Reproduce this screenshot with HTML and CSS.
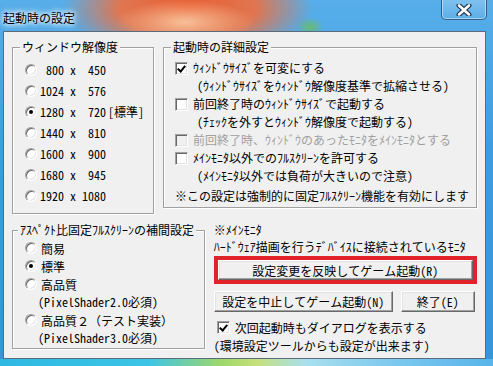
FILE: index.html
```html
<!DOCTYPE html>
<html lang="ja">
<head>
<meta charset="utf-8">
<title>起動時の設定</title>
<link rel="stylesheet" href="styles.css">
</head>
<body>
<div class="window">
  <div class="titlebar">
    <span class="title">起動時の設定</span>
    <div class="close">
      <svg width="20" height="12" viewBox="0 0 20 12">
        <path d="M5 1.5 L15 10.5 M15 1.5 L5 10.5" stroke="#1f3550" stroke-width="5" stroke-linecap="round"/>
        <path d="M5 1.5 L15 10.5 M15 1.5 L5 10.5" stroke="#ffffff" stroke-width="2.6" stroke-linecap="round"/>
      </svg>
    </div>
  </div>
  <div class="client">
    <div class="top-row">
      <fieldset class="group g-res">
        <legend>ウィンドウ解像度</legend>
        <div class="res-list">
          <div class="res-row"><span class="radio"></span><span class="n1">800</span><span class="x">x</span><span class="n2">450</span></div>
          <div class="res-row"><span class="radio"></span><span class="n1">1024</span><span class="x">x</span><span class="n2">576</span></div>
          <div class="res-row"><span class="radio on"></span><span class="n1">1280</span><span class="x">x</span><span class="n2">720</span><span class="tag">[標準]</span></div>
          <div class="res-row"><span class="radio"></span><span class="n1">1440</span><span class="x">x</span><span class="n2">810</span></div>
          <div class="res-row"><span class="radio"></span><span class="n1">1600</span><span class="x">x</span><span class="n2">900</span></div>
          <div class="res-row"><span class="radio"></span><span class="n1">1680</span><span class="x">x</span><span class="n2">945</span></div>
          <div class="res-row"><span class="radio"></span><span class="n1">1920</span><span class="x">x</span><span class="n2">1080</span></div>
        </div>
      </fieldset>
      <fieldset class="group g-detail">
        <legend>起動時の詳細設定</legend>
        <div class="detail-list">
          <div class="chk-row"><span class="check on"></span><span>ｳｨﾝﾄﾞｳｻｲｽﾞを可変にする</span></div>
          <div class="sub-row">(ｳｨﾝﾄﾞｳｻｲｽﾞをｳｨﾝﾄﾞｳ解像度基準で拡縮させる)</div>
          <div class="chk-row"><span class="check"></span><span>前回終了時のｳｨﾝﾄﾞｳｻｲｽﾞで起動する</span></div>
          <div class="sub-row">(ﾁｪｯｸを外すとｳｨﾝﾄﾞｳ解像度で起動する)</div>
          <div class="chk-row disabled"><span class="check"></span><span>前回終了時、ｳｨﾝﾄﾞｳのあったﾓﾆﾀをﾒｲﾝﾓﾆﾀとする</span></div>
          <div class="chk-row"><span class="check"></span><span>ﾒｲﾝﾓﾆﾀ以外でのﾌﾙｽｸﾘｰﾝを許可する</span></div>
          <div class="sub-row">(ﾒｲﾝﾓﾆﾀ以外では負荷が大きいので注意)</div>
          <div class="note-row">※この設定は強制的に固定ﾌﾙｽｸﾘｰﾝ機能を有効にします</div>
        </div>
      </fieldset>
    </div>
    <div class="bottom-row">
      <fieldset class="group g-interp">
        <legend>ｱｽﾍﾟｸﾄ比固定ﾌﾙｽｸﾘｰﾝの補間設定</legend>
        <div class="interp-list">
          <div class="opt-row"><span class="radio"></span><span>簡易</span></div>
          <div class="opt-row"><span class="radio on"></span><span>標準</span></div>
          <div class="opt-row"><span class="radio"></span><span>高品質</span></div>
          <div class="opt-sub">(PixelShader2.0必須)</div>
          <div class="opt-row"><span class="radio"></span><span>高品質２（テスト実装）</span></div>
          <div class="opt-sub">(PixelShader3.0必須)</div>
        </div>
      </fieldset>
      <div class="actions">
        <div class="info">※ﾒｲﾝﾓﾆﾀ</div>
        <div class="info">ﾊｰﾄﾞｳｪｱ描画を行うﾃﾞﾊﾞｲｽに接続されているﾓﾆﾀ</div>
        <div class="red-frame"><button class="btn btn-wide">設定変更を反映してゲーム起動(R)</button></div>
        <div class="btn-row">
          <button class="btn btn-cancel">設定を中止してゲーム起動(N)</button>
          <button class="btn btn-exit">終了(E)</button>
        </div>
        <div class="chk-row bottom-chk"><span class="check on"></span><span>次回起動時もダイアログを表示する</span></div>
        <div class="foot">(環境設定ツールからも設定が出来ます)</div>
      </div>
    </div>
  </div>
</div>
</body>
</html>
```
FILE: styles.css
```css
* { box-sizing: border-box; }
html, body { margin: 0; padding: 0; }
body {
  width: 493px;
  height: 366px;
  overflow: hidden;
  font-family: "Noto Sans Mono CJK JP", "Noto Sans CJK JP", sans-serif;
  font-size: 12px;
  color: #000;
}
.window {
  width: 493px;
  height: 366px;
  display: flex;
  flex-direction: column;
  background:
    linear-gradient(90deg, #2fb8e2 0%, #3cc4e6 30%, #9fd86a 45%, #c6e07a 52%, #a8e0ee 62%, #7cc8ee 80%, #58b4ea 100%) left bottom / 100% 7px no-repeat,
    radial-gradient(ellipse 70px 22px at 185px 22px, rgba(248,196,156,0.95), rgba(248,170,120,0) 100%),
    radial-gradient(ellipse 125px 52px at 188px 8px, rgba(234,92,48,1), rgba(238,112,64,0.9) 55%, rgba(240,150,100,0) 100%),
    radial-gradient(ellipse 14px 10px at 310px 27px, rgba(110,190,80,0.8), rgba(110,190,80,0) 100%),
    linear-gradient(180deg, #57aee9 0%, #3e9de2 40%, #3594da 100%);
}
.titlebar {
  height: 31px;
  flex: none;
  display: flex;
  align-items: flex-start;
  justify-content: space-between;
  padding: 0 6px 0 3px;
}
.title {
  margin-top: 10px;
  line-height: 16px;
  font-family: "Noto Sans CJK JP", sans-serif;
  font-size: 12px;
  color: #000;
  text-shadow: 0 0 4px #fff, 0 0 6px #fff, 0 0 8px rgba(255,255,255,0.8);
}
.close {
  width: 46px;
  height: 22px;
  margin-top: -2px;
  border: 1px solid rgba(30,60,100,0.75);
  border-radius: 0 0 5px 5px;
  box-shadow: inset 0 0 0 1px rgba(255,255,255,0.45);
  background: linear-gradient(180deg, rgba(255,255,255,0.25), rgba(120,180,230,0.2));
  display: flex;
  align-items: center;
  justify-content: center;
  padding-top: 2px;
}
.client {
  margin: 0 7px 0 3px;
  height: 328px;
  background: #f0f0f0;
  border: 1px solid #5b6b7c;
  padding: 8px 8px 0 8px;
}
.top-row {
  display: flex;
  align-items: flex-start;
  gap: 9px;
}
.bottom-row {
  display: flex;
  align-items: flex-start;
  gap: 8px;
  margin-top: 9px;
}
.group {
  margin: 0;
  padding: 0;
  border: 1px solid #a0a0a0;
  box-shadow: inset 1px 1px 0 #fff, 1px 1px 0 #fff;
  min-inline-size: 0;
}
.group legend {
  padding: 0 2px;
  margin-left: 7px;
  line-height: 14px;
  background: #f0f0f0;
  white-space: nowrap;
}
.g-res { width: 142px; height: 174px; }
.g-detail { width: 314px; height: 168px; }
.g-interp { width: 194px; height: 126px; }
.g-interp legend { margin-left: 5px; }

.radio {
  display: inline-block;
  flex: none;
  width: 12px;
  height: 12px;
  border-radius: 50%;
  border: 1px solid;
  border-color: #a0a0a0 #ffffff #ffffff #a0a0a0;
  background: #fff;
  box-shadow: inset 1px 1px 0 #696969, inset -1px -1px 0 #e3e3e3;
  position: relative;
}
.radio.on::after {
  content: "";
  position: absolute;
  left: 3px;
  top: 3px;
  width: 4px;
  height: 4px;
  border-radius: 50%;
  background: #000;
}
.check {
  display: inline-block;
  flex: none;
  width: 13px;
  height: 13px;
  border: 1px solid;
  border-color: #a0a0a0 #ffffff #ffffff #a0a0a0;
  background: #fff;
  box-shadow: inset 1px 1px 0 #696969, inset -1px -1px 0 #e3e3e3;
  position: relative;
}
.check.on::after {
  content: "";
  position: absolute;
  left: 3px;
  top: 1px;
  width: 3px;
  height: 6px;
  border: solid #000;
  border-width: 0 2px 2px 0;
  transform: rotate(40deg);
}
.disabled { color: #a0a0a0; }
.disabled .check { background: #f0f0f0; }

.res-list { padding: 5px 0 0 12px; }
.res-row {
  height: 21px;
  display: flex;
  align-items: center;
}
.res-row .n1 { width: 24px; text-align: right; margin-left: 3px; }
.res-row .x { width: 18px; text-align: center; }
.res-row .n2 { width: 24px; text-align: right; }
.res-row .tag { margin-left: 2px; }

.detail-list { padding: 5px 0 0 11px; }
.detail-list .chk-row,
.detail-list .sub-row { height: 18px; line-height: 18px; }
.chk-row { display: flex; align-items: center; gap: 5px; white-space: nowrap; }
.sub-row { padding-left: 22px; white-space: nowrap; }
.note-row { margin: 2px 0 0 0; height: 18px; line-height: 18px; white-space: nowrap; }

.interp-list { padding: 2px 0 0 12px; }
.opt-row { height: 18px; display: flex; align-items: center; gap: 4px; }
.opt-sub { height: 18px; line-height: 18px; padding-left: 13px; white-space: nowrap; }

.actions { width: 266px; padding-left: 1px; }
.info { line-height: 14px; margin-bottom: 3px; white-space: nowrap; }
.red-frame {
  margin-top: -1px;
  border: 4px solid #e0232b;
  height: 28px;
  display: flex;
}
.btn {
  font: inherit;
  color: #000;
  background: #f0f0f0;
  border: 1px solid;
  border-color: #ffffff #696969 #696969 #ffffff;
  box-shadow: inset -1px -1px 0 #a0a0a0, inset 1px 1px 0 #e3e3e3;
  padding: 0;
  margin: 0;
  white-space: nowrap;
}
.btn-wide { flex: 1; height: 20px; }
.btn-row { display: flex; gap: 8px; margin-top: 7px; }
.btn-cancel { width: 179px; height: 21px; }
.btn-exit { width: 74px; height: 21px; }
.bottom-chk { margin-top: 7px; height: 16px; padding-left: 3px; }
.foot { margin-top: 2px; line-height: 18px; white-space: nowrap; }
```
